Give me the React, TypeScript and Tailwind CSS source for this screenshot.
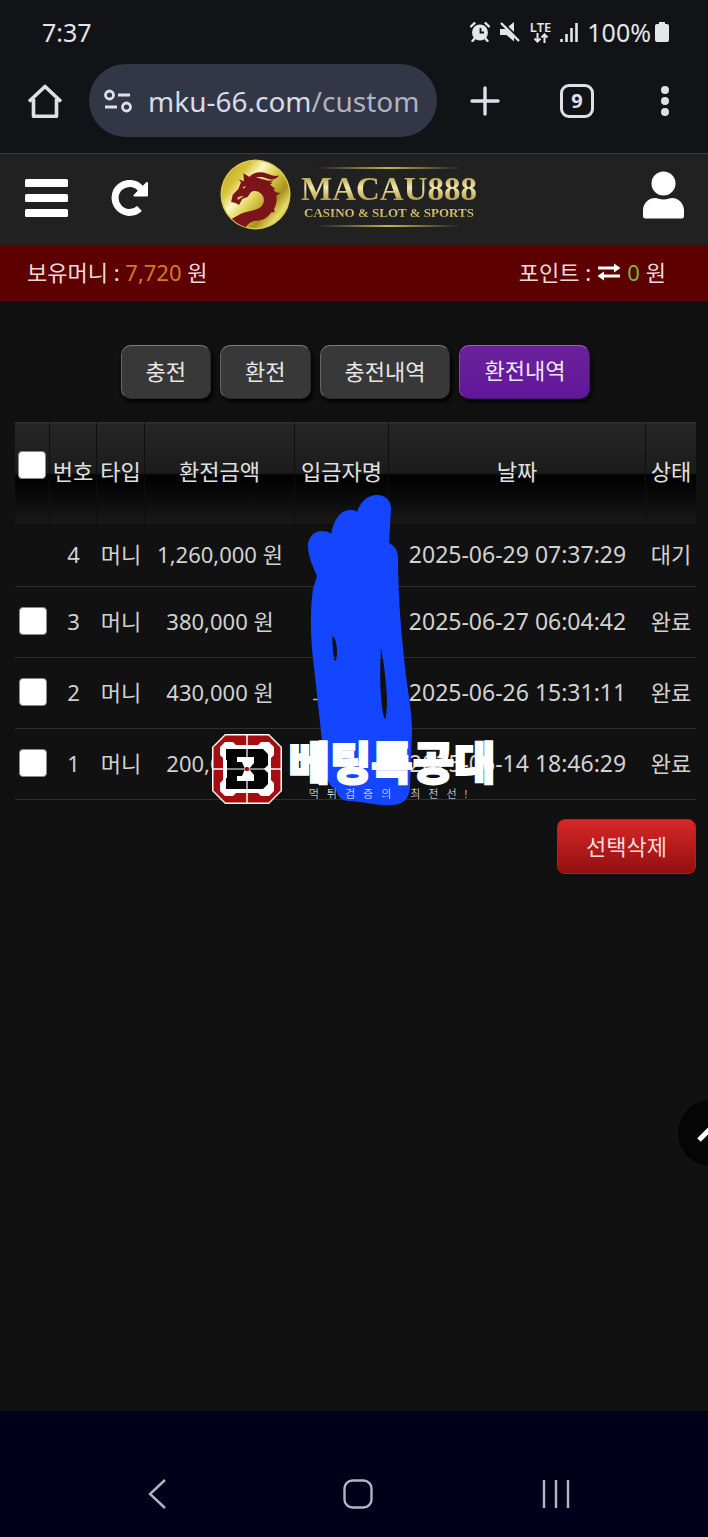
import type { ReactNode } from "react";

type Withdrawal = {
  no: number;
  type: string;
  amount: string;
  date: string;
  status: string;
  selectable: boolean;
};

const withdrawals: Withdrawal[] = [
  { no: 4, type: "머니", amount: "1,260,000 원", date: "2025-06-29 07:37:29", status: "대기", selectable: false },
  { no: 3, type: "머니", amount: "380,000 원", date: "2025-06-27 06:04:42", status: "완료", selectable: true },
  { no: 2, type: "머니", amount: "430,000 원", date: "2025-06-26 15:31:11", status: "완료", selectable: true },
  { no: 1, type: "머니", amount: "200,000 원", date: "2025-06-14 18:46:29", status: "완료", selectable: true },
];

const tabs = ["충전", "환전", "충전내역", "환전내역"];
const activeTab = "환전내역";

function StatusBar() {
  return (
    <div className="flex h-16 items-center pr-[39px] pl-[42px] text-[25px] leading-8 text-[#e4e5e8]">
      <span>7:37</span>
      <div className="ml-auto flex items-center">
        <svg className="h-5 w-5" viewBox="0 0 20 20" fill="none" aria-hidden="true">
          <circle cx="10" cy="10.500" r="8" fill="currentColor" />
          <path d="M1 4.500 4.500 1.200M19 4.500l-3.500-3.300M4.500 16.500 2.500 19M15.500 16.500l2 2.500" stroke="currentColor" strokeWidth="2.400" strokeLinecap="round" />
          <path d="M10.500 6v4.500H14" stroke="#121316" strokeWidth="1.800" />
        </svg>
        <svg className="ml-2.5 h-5 w-5" viewBox="0 0 20 20" aria-hidden="true">
          <path d="M0 7h5.500L14 15v4.500L6.500 13H0zM8.500 4.500 14 0v10z" fill="currentColor" />
          <path d="m1 1 18 18" stroke="currentColor" strokeWidth="2.400" />
        </svg>
        <span className="ml-2.5 flex flex-col items-center text-[13px] leading-3 font-semibold">
          LTE
          <svg className="h-2.5 w-4" viewBox="0 0 16 10" fill="none" stroke="currentColor" strokeWidth="2" aria-hidden="true">
            <path d="M4.500 0v8.500M1.500 5.500l3 3 3-3M11.500 10V1.500M8.500 4.500l3-3 3 3" />
          </svg>
        </span>
        <svg className="ml-2 h-5 w-5" viewBox="0 0 20 20" stroke="currentColor" strokeWidth="2.600" aria-hidden="true">
          <path d="M2.500 20v-3M7.500 20v-8M12.500 20V6M17.500 20V1" />
        </svg>
        <span className="ml-2">100%</span>
        <svg className="ml-1 h-5 w-3.5" viewBox="0 0 14 20" fill="currentColor" aria-hidden="true">
          <path d="M4 0h6v2h2a2 2 0 0 1 2 2v14a2 2 0 0 1-2 2H2a2 2 0 0 1-2-2V4a2 2 0 0 1 2-2h2z" />
        </svg>
      </div>
    </div>
  );
}

function BrowserBar() {
  return (
    <div className="flex items-center pr-[39px] pb-4 pl-7 text-[#dfe0e6]">
      <button type="button" aria-label="Home">
        <svg className="size-[34px]" viewBox="0 0 34 34" fill="none" stroke="currentColor" strokeWidth="3.600" strokeLinejoin="round" aria-hidden="true">
          <path d="M1 17.500 17 2.500l16 15M5.500 15v17.300h23V15" />
        </svg>
      </button>
      <button type="button" className="ml-[27px] flex h-[73px] min-w-0 flex-1 items-center rounded-full bg-[#323646] pl-[15px] text-left">
        <svg className="h-6 w-7 shrink-0" viewBox="0 0 28 24" fill="none" stroke="currentColor" strokeWidth="2.800" aria-hidden="true">
          <circle cx="5.500" cy="6" r="4" />
          <path d="M14 6h12M1 18h12" />
          <circle cx="22.500" cy="18" r="4" />
        </svg>
        <span className="ml-4 overflow-hidden text-[28px] leading-10 whitespace-nowrap text-[#d9dbe6]">
          mku-66.com<span className="text-[#b0b3c1]">/custom</span>
        </span>
      </button>
      <button type="button" aria-label="New tab" className="ml-[33px]">
        <svg className="size-[30px]" viewBox="0 0 30 30" stroke="currentColor" strokeWidth="3.400" strokeLinecap="round" aria-hidden="true">
          <path d="M15 2v26M2 15h26" />
        </svg>
      </button>
      <button type="button" aria-label="Open tabs" className="ml-[60px] flex size-[34px] items-center justify-center rounded-[9px] border-[3px] border-current text-xl leading-5 font-bold">
        9
      </button>
      <button type="button" aria-label="More" className="ml-[67px]">
        <svg className="h-8 w-2" viewBox="0 0 8 32" fill="currentColor" aria-hidden="true">
          <circle cx="4" cy="5" r="4" />
          <circle cx="4" cy="16" r="4" />
          <circle cx="4" cy="27" r="4" />
        </svg>
      </button>
    </div>
  );
}

function DragonCoin() {
  return (
    <svg className="size-[71px] shrink-0" viewBox="30 27 212 215" aria-hidden="true">
      <defs>
        <linearGradient id="coin" x1="0" y1="0.100" x2="1" y2="0.900">
          <stop offset="0" stopColor="#b9a31c" />
          <stop offset="0.220" stopColor="#d9c43a" />
          <stop offset="0.360" stopColor="#fbf7c6" />
          <stop offset="0.500" stopColor="#e3d45a" />
          <stop offset="0.720" stopColor="#a8921a" />
          <stop offset="0.860" stopColor="#e9dc6a" />
          <stop offset="1" stopColor="#b79f1e" />
        </linearGradient>
        <clipPath id="coin-edge">
          <circle cx="136" cy="134.500" r="103" />
        </clipPath>
      </defs>
      <circle cx="136" cy="134.500" r="106" fill="#d8c95a" />
      <circle cx="136" cy="134.500" r="102" fill="url(#coin)" />
      <g clipPath="url(#coin-edge)" fill="#7c1519">
        <path d="M58 212 92 193C110 184 138 184 152 172C165 160 165 140 150 130C142 123 130 122 122 128L112 142 96 148 86 166 76 160 62 157 67 135 84 118 92 98 86 88 101 94 99 70 122 84C135 82 150 84 165 94L188 100 180 104 196 118 190 120 198 128 211 130 199 138C202 150 199 165 192 178L194 188 184 188C172 206 158 212 142 214C124 214 112 222 104 240L78 236z" />
        <path d="M112 88c8-14 24-22 42-21 20 2 34 15 53 10-7 13-22 14-34 10-18-7-32-8-44 3z" />
        <path d="M126 92c10-6 26-7 38-2 10 3 18 4 26 0-5 9-15 11-24 9z" />
      </g>
      <path d="m96 113 11-5-5 9zM80 144l10-4 12 0-10 5-9 6z" fill="#d9c43a" />
    </svg>
  );
}

function SiteLogo() {
  return (
    <a href="/" className="mb-1.5 ml-[71px] flex items-center gap-2.5">
      <DragonCoin />
      <span className="flex flex-col items-center pt-1 font-['Liberation_Serif',serif] font-bold">
        <span className="h-0.5 w-36 bg-linear-to-r from-transparent via-[#c9b04f] to-transparent" />
        <span className="mt-1 bg-linear-to-b from-[#a58a35] via-[#f1e8a9] via-45% to-[#a08226] bg-clip-text text-[33px] leading-8 text-transparent">
          MACAU888
        </span>
        <span className="bg-linear-to-b from-[#e9dc97] to-[#b59a48] bg-clip-text text-[13px] leading-4 text-transparent">
          CASINO &amp; SLOT &amp; SPORTS
        </span>
        <span className="mt-1 h-0.5 w-36 bg-linear-to-r from-transparent via-[#c9b04f] to-transparent" />
      </span>
    </a>
  );
}

function SiteHeader() {
  return (
    <header className="flex h-[92px] items-center border-t border-[#3b3c3d] bg-[#212121] pr-6 pb-1 pl-[25px] text-white">
      <button type="button" aria-label="메뉴">
        <svg className="h-[38px] w-[43px]" viewBox="0 0 43 38" fill="currentColor" aria-hidden="true">
          <rect y="0" width="43" height="8" rx="1.500" />
          <rect y="15" width="43" height="8" rx="1.500" />
          <rect y="30" width="43" height="8" rx="1.500" />
        </svg>
      </button>
      <button type="button" aria-label="새로고침" className="ml-[43px]">
        <svg className="h-9 w-[38px]" viewBox="0 0 38 36" fill="none" aria-hidden="true">
          <path d="M28.500 28.500A14.500 14.500 0 1 1 30 9" stroke="currentColor" strokeWidth="7" />
          <path d="M36 3v12.500H23.500z" fill="currentColor" stroke="currentColor" strokeWidth="2" strokeLinejoin="round" />
        </svg>
      </button>
      <SiteLogo />
      <button type="button" aria-label="내 정보" className="mb-1.5 ml-auto">
        <svg className="h-12 w-[41px]" viewBox="0 0 41 48" fill="currentColor" aria-hidden="true">
          <circle cx="20.500" cy="12.500" r="12" />
          <path d="M12 27c2.500 0 4.500 1.500 8.500 1.500S26.500 27 29 27c7 0 12 6 12 12.500V45a2.500 2.500 0 0 1-2.500 2.500h-36A2.500 2.500 0 0 1 0 45v-5.500C0 33 5 27 12 27z" />
        </svg>
      </button>
    </header>
  );
}

function BalanceBar() {
  return (
    <div className="flex h-14 items-center justify-between bg-[#5c0000] pr-[42px] pb-0.5 pl-[27px] text-[22px] leading-8 text-[#f3d9d9]">
      <p>
        보유머니 : <span className="text-[#d9772b]">7,720</span> 원
      </p>
      <p className="flex items-center gap-1.5">
        <span>포인트 :</span>
        <svg className="h-[18px] w-6" viewBox="0 0 24 18" fill="#ffffff" aria-hidden="true">
          <path d="M1 3.500h16V.5L23.500 5 17 9.500v-3H1zM23 11.500H7v-3L.5 13 7 17.500v-3h16z" />
        </svg>
        <span className="text-[#7fb347]">0</span>
        <span>원</span>
      </p>
    </div>
  );
}

function HeadCell({ children }: { children: ReactNode }) {
  return (
    <th className="border-t-2 border-r border-t-[#2e2e2e] border-r-[#0e0e0e] bg-[linear-gradient(to_bottom,#262626,#1b1b1b_49%,#020202_51%,#060606_65%,#191919)] p-0 pb-1.5 font-normal whitespace-nowrap last:border-r-0">
      {children}
    </th>
  );
}

function RowCheck({ label }: { label: string }) {
  return (
    <input
      type="checkbox"
      aria-label={label}
      className="block size-7 appearance-none rounded border border-[#8a8a8a] bg-white"
    />
  );
}

// Marker stroke painted over the depositor names
function Scribble() {
  return (
    <svg className="absolute top-[73px] left-[292px] h-[312px] w-[106px]" viewBox="307 495 106 312" aria-hidden="true">
      <path d="M313 699.500h7" stroke="#b5b5b5" strokeWidth="1.500" />
      <path
        fillRule="evenodd"
        fill="#1546ff"
        d="M308 548c-1-9 5-17 14-17 4 0 7 1 9 3 3-14 9-24 19-24 3 0 5 0 7 2 4-11 11-17 20-17 9 0 14 6 14 14l-2 34c6 3 9 8 9 15 0 30 2 63 6 100 3 32 8 50 8 72l-2 58c-1 11-7 17-19 17-15 1-30-4-43-4-8-1-11-6-12-12-8-3-9-10-11-20l-11-102c-4-30-4-57-1-78l4-13c-4-10-8-17-9-28zM332 637c3-2 5 8 5 15 0 5-1 9-2 9-2-3-2-15-3-24zM381 648c4 20 6 44 6 53 0 9-1 17-2 18-4-6-6-41-4-71z"
      />
    </svg>
  );
}

function HistoryTable() {
  return (
    <div className="relative mt-[23px]">
      <table className="w-full table-fixed border-separate border-spacing-0 text-center text-[22px] leading-8 text-[#d2d2d2]">
        <colgroup>
          <col className="w-[35px]" />
          <col className="w-[47px]" />
          <col className="w-12" />
          <col className="w-[150px]" />
          <col className="w-[94px]" />
          <col />
          <col className="w-[50px]" />
        </colgroup>
        <thead>
          <tr className="h-[102px] text-[#e0e0e0]">
            <HeadCell>
              <div className="flex justify-center pb-3">
                <RowCheck label="전체 선택" />
              </div>
            </HeadCell>
            <HeadCell>번호</HeadCell>
            <HeadCell>타입</HeadCell>
            <HeadCell>환전금액</HeadCell>
            <HeadCell>입금자명</HeadCell>
            <HeadCell>날짜</HeadCell>
            <HeadCell>상태</HeadCell>
          </tr>
        </thead>
        <tbody className="[&_td]:border-b [&_td]:border-[#2f2f2f] [&_td]:p-0 [&_td]:pb-0.5 [&_td]:whitespace-nowrap">
          {withdrawals.map((row) => (
            <tr key={row.no} className="h-[71px] first:h-[63px]">
              <td>
                <div className="flex justify-center">{row.selectable && <RowCheck label={`${row.no}번 선택`} />}</div>
              </td>
              <td>{row.no}</td>
              <td>{row.type}</td>
              <td>{row.amount}</td>
              <td />
              <td className="text-[23px]">{row.date}</td>
              <td>{row.status}</td>
            </tr>
          ))}
        </tbody>
      </table>
      <Scribble />
    </div>
  );
}

function Watermark() {
  return (
    <div className="pointer-events-none absolute inset-0 flex items-center justify-center gap-1.5 text-white">
      <svg className="size-[70px]" viewBox="0 0 70 70" aria-hidden="true">
        <path d="M13 0h44l13 13v44L57 70H13L0 57V13z" fill="#fff" />
        <path d="M13.500 1.500h43l12 12v43l-12 12h-43l-12-12v-43z" fill="#a60d10" />
        <path d="M13 8h8l3 3h22l3-3h8l5 5v8l-3 3v22l3 3v8l-5 5h-8l-3-3H24l-3 3h-8l-5-5v-8l3-3V24l-3-3v-8z" fill="#fff" />
        <path d="M35 1v10M35 59v10M1 35h10M59 35h10" stroke="#fff" strokeWidth="1.500" />
        <path d="M14 15h37l5 5v11l-4 4 4 4v11l-5 5H14V44h1V26h-1z" fill="#050505" />
        <path d="M25 23h17v6l-5 6 5 6v6H25v-5h5l3-7-3-7h-5z" fill="#fff" />
        <path d="M35 14v42M11 35h48" stroke="#fff" strokeWidth="1.200" />
        <circle cx="35" cy="35" r="2.200" fill="#a60d10" />
      </svg>
      <div className="flex flex-col items-center">
        <span className="font-['Noto_Sans_CJK_KR',sans-serif] text-[45px] leading-[50px] font-black [-webkit-text-stroke:2px_white]">
          베팅특공대
        </span>
        <span className="text-[11px] leading-4 font-light tracking-[8px]">먹튀검증의 최전선!</span>
      </div>
    </div>
  );
}

function SystemNav() {
  return (
    <nav className="flex justify-between bg-[#00001a] pt-[68px] pr-[138px] pb-7 pl-[141px] text-[#b3b3c4]">
      <button type="button" aria-label="Back" className="flex w-8 justify-center">
        <svg className="h-[30px] w-[18px]" viewBox="0 0 18 30" fill="none" stroke="currentColor" strokeWidth="2.400" aria-hidden="true">
          <path d="M17 1 2 15l15 14" />
        </svg>
      </button>
      <button type="button" aria-label="Home">
        <svg className="size-[30px]" viewBox="0 0 30 30" fill="none" stroke="currentColor" strokeWidth="2.400" aria-hidden="true">
          <rect x="1.500" y="1.500" width="27" height="27" rx="8" />
        </svg>
      </button>
      <button type="button" aria-label="Recents">
        <svg className="h-[30px] w-7" viewBox="0 0 28 30" stroke="currentColor" strokeWidth="2.400" aria-hidden="true">
          <path d="M2 1v28M14 1v28M26 1v28" />
        </svg>
      </button>
    </nav>
  );
}

export default function App() {
  return (
    <div className="relative flex min-h-screen flex-col overflow-hidden bg-[#111111] font-['Noto_Sans','Noto_Sans_CJK_KR',sans-serif]">
      <div className="bg-[#121316]">
        <StatusBar />
        <BrowserBar />
      </div>
      <SiteHeader />
      <BalanceBar />
      <main className="relative flex-1 pt-11 pr-3 pl-[15px]">
        <div className="flex justify-center gap-[9px]">
          {tabs.map((tab) => (
            <button
              key={tab}
              type="button"
              className={
                tab === activeTab
                  ? "h-[54px] rounded-[10px] border border-t-[#9a5cc4] border-r-[#4a1478] border-b-[#4a1478] border-l-[#8445b0] bg-linear-to-b from-[#6a2299] to-[#62169b] px-6 pb-1 text-[22px] leading-8 text-[#efe6f5] shadow-[2px_3px_4px_#000000]"
                  : "h-[54px] rounded-[10px] border border-t-[#7a7a7a] border-r-[#2c2c2c] border-b-[#2c2c2c] border-l-[#666666] bg-[#383838] px-6 pb-0.5 text-[22px] leading-8 text-[#e6e6e6] shadow-[2px_3px_4px_#000000]"
              }
            >
              {tab}
            </button>
          ))}
        </div>
        <HistoryTable />
        <div className="mt-[19px] flex justify-end">
          <button
            type="button"
            className="h-[55px] rounded-lg border border-[#c41a1a] bg-linear-to-b from-[#d62828] to-[#930f0f] px-7 pb-0.5 text-[22px] leading-8 text-[#fbdcdc]"
          >
            선택삭제
          </button>
        </div>
        <button
          type="button"
          aria-label="맨 위로"
          className="absolute right-[-36px] bottom-[245px] flex size-[66px] items-center justify-center rounded-full bg-[#050505] text-white"
        >
          <svg className="h-6 w-7" viewBox="0 0 28 24" fill="none" stroke="currentColor" strokeWidth="5" aria-hidden="true">
            <path d="M2 19 14 7l12 12" />
          </svg>
        </button>
      </main>
      <SystemNav />
      <Watermark />
    </div>
  );
}
